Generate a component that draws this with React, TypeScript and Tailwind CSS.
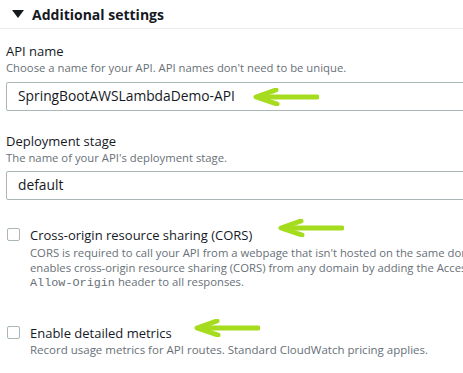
import React from "react";

function Arrow({ className }: { className?: string }) {
  return (
    <svg viewBox="0 0 66 18" className={className} fill="none">
      <path d="M64 9 L8 9" stroke="#a6dc1e" strokeWidth="5" strokeLinecap="round" />
      <path d="M23 2 L3 9 L24 16" stroke="#a6dc1e" strokeWidth="5" strokeLinecap="round" strokeLinejoin="round" />
    </svg>
  );
}

function Checkbox() {
  return <div className="w-[13px] h-[13px] shrink-0 rounded-[2px] border border-[#aab7b8] bg-white" />;
}

export default function App() {
  return (
    <div
      className="w-[463px] h-[373px] overflow-hidden bg-white text-[#16191f]"
      style={{ fontFamily: '"Open Sans", sans-serif' }}
    >
      {/* Section header */}
      <div className="flex items-center gap-[8px] pl-[12px] h-[29px] border-b border-[#eaeded]">
        <svg width="12" height="8" viewBox="0 0 12 8">
          <path d="M0 0 H12 L6 8 Z" fill="#16191f" />
        </svg>
        <span className="text-[14px] font-bold">Additional settings</span>
      </div>

      <div className="pl-[6px] pt-[13px]">
        {/* API name */}
        <div className="text-[13px] leading-[18px]">API name</div>
        <div className="text-[11.3px] leading-[16px] text-[#687078] whitespace-nowrap">
          Choose a name for your API. API names don't need to be unique.
        </div>
        <div className="mt-[6px] flex items-center gap-[18px] h-[29px] w-[480px] border border-[#aab7b8] rounded-[2px] pl-[11px]">
          <span className="text-[13.8px]">SpringBootAWSLambdaDemo-API</span>
          <Arrow className="w-[66px] h-[18px]" />
        </div>

        {/* Deployment stage */}
        <div className="mt-[21px] text-[13px] leading-[18px]">Deployment stage</div>
        <div className="text-[11.3px] leading-[16px] text-[#687078]">The name of your API's deployment stage.</div>
        <div className="mt-[5px] flex items-center h-[29px] w-[480px] border border-[#aab7b8] rounded-[2px] pl-[11px]">
          <span className="text-[13.8px]">default</span>
        </div>

        {/* CORS */}
        <div className="mt-[26px] flex gap-[10px] pl-[1px]">
          <div className="pt-[2px]">
            <Checkbox />
          </div>
          <div className="w-[470px]">
            <div className="flex items-center gap-[26px] text-[13px] leading-[18px]">
              <span>Cross-origin resource sharing (CORS)</span>
              <Arrow className="w-[66px] h-[18px] -mt-[14px]" />
            </div>
            <div className="mt-[2px] text-[11.3px] leading-[14.5px] text-[#687078] whitespace-nowrap">
              <div>CORS is required to call your API from a webpage that isn't hosted on the same domain. Enabling CORS</div>
              <div>enables cross-origin resource sharing (CORS) from any domain by adding the Access-Control-</div>
              <div>
                <span style={{ fontFamily: '"Liberation Mono", monospace' }} className="text-[11.8px]">Allow-Origin</span> header to all responses.
              </div>
            </div>
          </div>
        </div>

        {/* Detailed metrics */}
        <div className="mt-[33px] flex gap-[10px] pl-[1px]">
          <div className="pt-[2px]">
            <Checkbox />
          </div>
          <div>
            <div className="flex items-center gap-[22px] text-[13px] leading-[18px]">
              <span>Enable detailed metrics</span>
              <Arrow className="w-[66px] h-[18px] -mt-[10px]" />
            </div>
            <div className="text-[11.5px] leading-[16px] text-[#687078] whitespace-nowrap">
              Record usage metrics for API routes. Standard CloudWatch pricing applies.
            </div>
          </div>
        </div>
      </div>
    </div>
  );
}
